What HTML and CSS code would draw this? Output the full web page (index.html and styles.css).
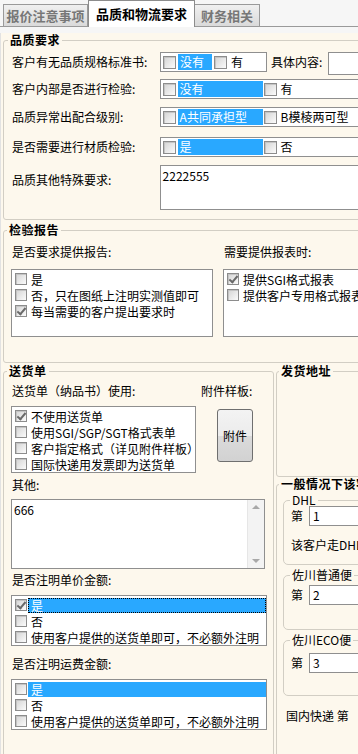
FILE: index.html
```html
<!DOCTYPE html>
<html lang="zh-CN">
<head>
	<meta charset="utf-8" />
	<title>品质和物流要求</title>
	<link rel="stylesheet" href="styles.css">
</head>
<body>
	<div class="tabbar">
		<div class="tab t1">报价注意事项</div>
		<div class="tab t2 on">品质和物流要求</div>
		<div class="tab t3">财务相关</div>
	</div>

	<div class="page">

		<fieldset class="grp g1">
			<legend>品质要求</legend>

			<div class="frow r1">
				<span class="lbl">客户有无品质规格标准书:</span>
				<div class="opts short">
					<span class="ck"></span><span class="opt sel s1">没有</span>
					<span class="ck"></span><span class="opt">有</span>
				</div>
				<span class="lbl2">具体内容:</span>
				<span class="edit"></span>
			</div>

			<div class="frow r2">
				<span class="lbl">客户内部是否进行检验:</span>
				<div class="opts">
					<span class="ck"></span><span class="opt sel">没有</span>
					<span class="ck"></span><span class="opt">有</span>
				</div>
			</div>

			<div class="frow r3">
				<span class="lbl">品质异常出配合级别:</span>
				<div class="opts">
					<span class="ck"></span><span class="opt sel">A共同承担型</span>
					<span class="ck"></span><span class="opt">B模棱两可型</span>
				</div>
			</div>

			<div class="frow r4">
				<span class="lbl">是否需要进行材质检验:</span>
				<div class="opts">
					<span class="ck"></span><span class="opt sel">是</span>
					<span class="ck"></span><span class="opt">否</span>
				</div>
			</div>

			<div class="frow r5">
				<span class="lbl top">品质其他特殊要求:</span>
				<div class="memo m1"><div class="txt">2222555</div></div>
			</div>
		</fieldset>

		<fieldset class="grp g2">
			<legend>检验报告</legend>
			<div class="cols">
				<div class="col c1">
					<div class="cap">是否要求提供报告:</div>
					<div class="lb rep">
						<div class="it"><span class="ck"></span><span class="tx">是</span></div>
						<div class="it"><span class="ck"></span><span class="tx">否，只在图纸上注明实测值即可</span></div>
						<div class="it"><span class="ck on"></span><span class="tx">每当需要的客户提出要求时</span></div>
					</div>
				</div>
				<div class="col c2">
					<div class="cap">需要提供报表时:</div>
					<div class="lb rep">
						<div class="it"><span class="ck on"></span><span class="tx">提供SGI格式报表</span></div>
						<div class="it"><span class="ck"></span><span class="tx">提供客户专用格式报表</span></div>
					</div>
				</div>
			</div>
		</fieldset>

		<div class="lower">
			<fieldset class="grp g3">
				<legend>送货单</legend>
				<div class="cols">
					<div class="col c3">
						<div class="cap">送货单（纳品书）使用:</div>
						<div class="lb dlv">
							<div class="it"><span class="ck on"></span><span class="tx">不使用送货单</span></div>
							<div class="it"><span class="ck"></span><span class="tx">使用SGI/SGP/SGT格式表单</span></div>
							<div class="it"><span class="ck"></span><span class="tx">客户指定格式（详见附件样板）</span></div>
							<div class="it"><span class="ck"></span><span class="tx">国际快递用发票即为送货单</span></div>
						</div>
					</div>
					<div class="col c4">
						<div class="cap">附件样板:</div>
						<div class="btn">附件</div>
					</div>
				</div>

				<div class="cap gap6">其他:</div>
				<div class="memo m2">
					<div class="txt">666</div>
					<div class="sb"><span class="up"></span><span class="dn"></span></div>
				</div>

				<div class="cap gap4">是否注明单价金额:</div>
				<div class="lb amt">
					<div class="it sel focus"><span class="ck on"></span><span class="tx">是</span></div>
					<div class="it"><span class="ck"></span><span class="tx">否</span></div>
					<div class="it"><span class="ck"></span><span class="tx">使用客户提供的送货单即可，不必额外注明</span></div>
				</div>

				<div class="cap gap10">是否注明运费金额:</div>
				<div class="lb amt">
					<div class="it sel"><span class="ck"></span><span class="tx">是</span></div>
					<div class="it"><span class="ck"></span><span class="tx">否</span></div>
					<div class="it"><span class="ck"></span><span class="tx">使用客户提供的送货单即可，不必额外注明</span></div>
				</div>
			</fieldset>

			<div class="side">
				<fieldset class="grp g4">
					<legend>发货地址</legend>
				</fieldset>

				<fieldset class="grp g5">
					<legend>一般情况下该客户走哪种快递</legend>

					<fieldset class="grp sub dhl">
						<legend>DHL</legend>
						<div class="nrow"><span>第</span><span class="edit small">1</span></div>
						<div class="note">该客户走DHL的账号</div>
					</fieldset>

					<fieldset class="grp sub sg1">
						<legend>佐川普通便</legend>
						<div class="nrow"><span>第</span><span class="edit small">2</span></div>
					</fieldset>

					<fieldset class="grp sub sg2">
						<legend>佐川ECO便</legend>
						<div class="nrow"><span>第</span><span class="edit small">3</span></div>
					</fieldset>

					<div class="nrow dom"><span>国内快递&nbsp;第</span><span class="edit small"></span></div>
				</fieldset>
			</div>
		</div>

	</div>
</body>
</html>
```

FILE: styles.css
```css
*{box-sizing:border-box;}
html,body{margin:0;padding:0;}
body{width:358px;height:754px;overflow:hidden;background:#f6f6f6;font-family:"Noto Sans CJK SC","Liberation Sans",sans-serif;font-size:12px;line-height:14px;color:#000;}

/* tabs */
.tabbar{height:27px;display:flex;align-items:flex-end;padding-left:3px;border-bottom:1px solid #9a9a9a;}
.tab{height:22px;border:1px solid #9a9a9a;border-bottom:0;background:linear-gradient(#f0f0f0,#dadada);font-weight:bold;font-size:13px;line-height:21px;color:#777;text-align:center;white-space:nowrap;}
.t1{width:85px;}
.t2{width:107px;}
.t3{width:65px;border-left:0;}
.tab.on{height:27px;margin-bottom:-1px;background:#fff;color:#000;line-height:25px;border-color:#8c8c8c;}

.page{background:#fdf8ed;height:727px;border-left:1px solid #e2e2e2;}

/* group boxes */
.grp{margin:0 -40px 0 2px;padding:0 8px 9px;border:1px solid #d2cec4;border-radius:3px;min-width:0;}
.grp legend{margin-left:-4px;padding:0 2px;font-weight:bold;letter-spacing:0.5px;line-height:14px;white-space:nowrap;}

.frow{display:flex;align-items:flex-start;white-space:nowrap;}
.lbl{width:148px;line-height:20px;}
.lbl.top{line-height:14px;padding-top:8px;}
.lbl2{margin-left:4px;line-height:20px;}
.r1{margin-top:5px;}
.r2{margin-top:4px;}
.r3{margin-top:8px;}
.r4{margin-top:10px;}
.r5{margin-top:8px;}

.opts{display:flex;align-items:center;width:230px;height:20px;padding-left:2px;background:#fff;border:1px solid #8f8f8f;}
.opts.short{width:107px;}
.opt{line-height:16px;padding-left:2px;}
.opt.sel{width:85px;margin:0 1px 0 1px;background:#29a8ff;color:#fff;}
.opt.sel.s1{width:34px;margin-right:2px;}
.opts .ck + .opt{margin-left:2px;}
.opts .ck{width:13px;height:13px;}

.edit{display:block;width:60px;height:23px;margin-left:6px;background:#fff;border:1px solid #8f8f8f;}

/* checkbox */
.ck{position:relative;flex:none;width:12px;height:12px;border:1px solid #8c8c8c;background:linear-gradient(135deg,#d4d4d4,#fbfbfb);box-shadow:inset 1px 1px #c4c4c4;}
.ck.on::after{content:"";position:absolute;left:3px;top:0;width:3px;height:7px;border:solid #6a6a6a;border-width:0 2px 2px 0;transform:rotate(40deg);}

/* memo */
.memo{display:flex;background:#fff;border:1px solid #8f8f8f;}
.memo .txt{flex:1;padding:3px 2px;}
.m1{width:230px;height:45px;}
.m2{width:254px;height:70px;margin-top:7px;}
.sb{display:flex;flex-direction:column;justify-content:space-between;width:17px;padding:5px 0;background:#f3f3f3;border-left:1px solid #e6e6e6;}
.sb span{align-self:center;width:0;height:0;border:4px solid transparent;}
.sb .up{border-bottom:4px solid #a8a8a8;border-top:0;}
.sb .dn{border-top:4px solid #a8a8a8;border-bottom:0;}

/* list boxes */
.cols{display:flex;}
.cap{padding-left:1px;line-height:14px;white-space:nowrap;}
.lb{background:#fff;border:1px solid #8f8f8f;padding-top:1px;overflow:hidden;}
.it{display:flex;align-items:center;height:16px;padding-left:3px;white-space:nowrap;}
.it .tx{flex:1;margin-left:1px;padding-left:3px;line-height:15px;}
.it.sel .tx{background:#29a8ff;color:#fff;}
.it.focus .tx{outline:1px dotted #000;outline-offset:-1px;}

.g1{margin-top:6px;}
.g2{margin-top:3px;padding:0 7px 25px;}
.g2 .cap{margin-top:8px;}
.g2 .lb{margin-top:10px;}
.c1{width:202px;}
.c2{flex:1;margin-left:10px;}
.rep{height:68px;}

.lower{display:flex;margin-top:1px;align-items:flex-start;}
.g3{flex:none;width:271px;margin:0 0 0 2px;padding:0 6px 40px 7px;}
.g3 .cols .cap{margin-top:6px;}
.c3{width:185px;}
.dlv{height:67px;margin-top:8px;}
.c4{margin-left:4px;}
.btn{width:36px;height:53px;margin:11px 0 0 17px;border:1px solid #6f6f6f;border-radius:3px;background:linear-gradient(#f3f3f3,#ececec 50%,#dbdbdb 51%,#d2d2d2);text-align:center;line-height:51px;}
.gap6{margin-top:5px;}
.gap4{margin-top:4px;}
.gap10{margin-top:11px;}
.amt{height:51px;margin-top:8px;}

.side{flex:1;min-width:0;}
.side .grp{margin:0 -80px 0 2px;padding:0 6px 0 6px;}
.g4{height:113px;}
.g5{margin-top:0 !important;padding-bottom:40px !important;}
.sub{margin:0 0 0 0 !important;padding:0 0 0 7px !important;border-radius:5px;}
.sub legend{line-height:12px;font-weight:normal;letter-spacing:0;margin-left:-1px;}
.dhl{margin-top:3px !important;padding-bottom:12px !important;}
.sg1{margin-top:4px !important;padding-bottom:24px !important;}
.sg2{margin-top:4px !important;padding-bottom:22px !important;}
.nrow{display:flex;align-items:center;white-space:nowrap;}
.edit.small{width:120px;height:20px;padding:2px 3px;line-height:14px;}
.dhl .nrow .edit,.sg1 .nrow .edit{margin-left:6px;}
.sg1 .nrow{margin-top:4px;}
.sg2 .nrow{margin-top:7px;}
.note{margin-top:12px;white-space:nowrap;}
.dom{margin-top:10px;padding-left:3px;}
.dom .edit{margin-left:9px;}
```
